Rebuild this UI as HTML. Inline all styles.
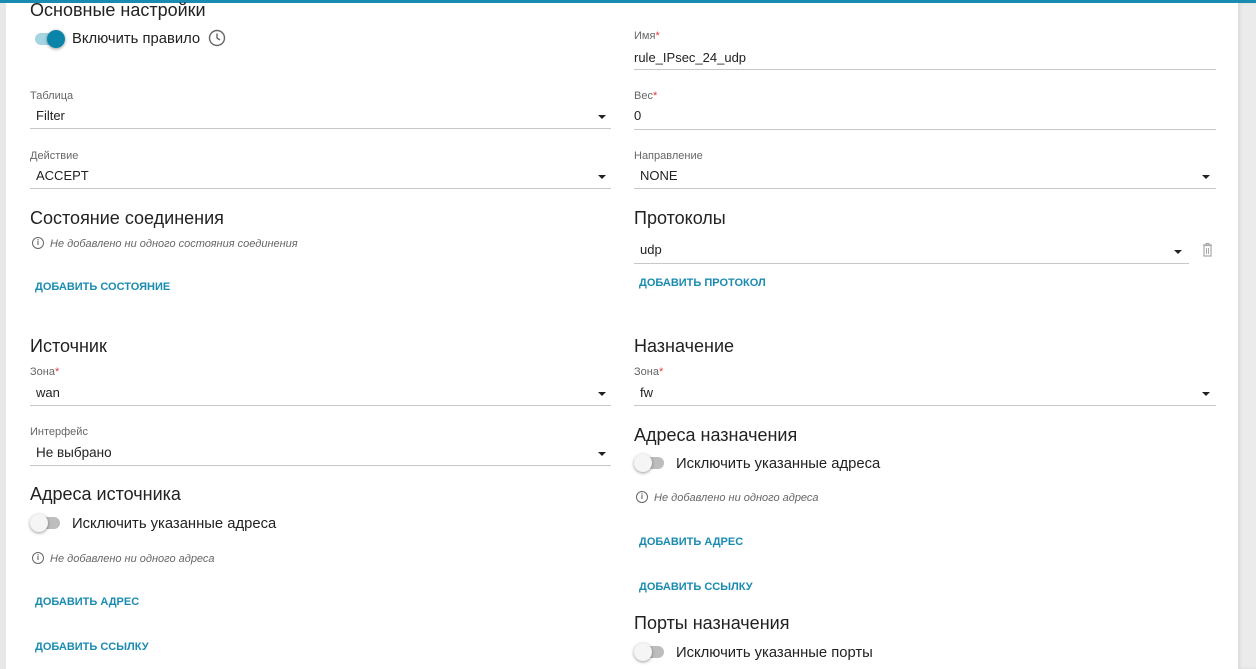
<!DOCTYPE html>
<html><head><meta charset="utf-8"><style>
*{margin:0;padding:0;box-sizing:border-box}
body{width:1256px;height:669px;overflow:hidden;background:#fff;font-family:"Liberation Sans","DejaVu Sans",sans-serif;color:#222;position:relative}
.t{position:absolute;height:20px;line-height:20px;white-space:nowrap}
.h{font-size:18px;color:#222}
.l{font-size:11px;color:#666}
.l b{color:#e53935;font-weight:normal}
.v{font-size:13px;color:#222}
.s{font-size:14.8px;color:#222}
.a{font-size:11px;font-weight:bold;color:#1a8bb0}
.i{font-size:11px;font-style:italic;color:#666}
.line{position:absolute;height:1px;background:#c8c8c8}
.arr{position:absolute;width:0;height:0;border-left:4px solid transparent;border-right:4px solid transparent;border-top:4px solid #222}
.tg{position:absolute;width:28px;height:12px;border-radius:6px;background:#bdbdbd}
.tg i{position:absolute;top:-3px;left:-2px;width:18px;height:18px;border-radius:50%;background:#f5f5f5;box-shadow:0 1px 3px rgba(0,0,0,.4)}
.tg.on{background:#a6d5e2}.tg.on i{left:12px;background:#0b84aa}
.inf{position:absolute;width:12px;height:12px;border:1.3px solid #666;border-radius:50%;font-size:8px;font-weight:bold;color:#666;text-align:center;line-height:10px;font-style:normal}
</style></head><body>
<div style="position:absolute;left:0;top:0;width:1256px;height:3px;background:#1a8bb0"></div>
<div style="position:absolute;left:0;top:3px;width:6px;height:666px;background:#e8e8e8"></div>
<div style="position:absolute;left:1238px;top:3px;width:18px;height:666px;background:#ebebeb;box-shadow:inset 2px 0 3px rgba(0,0,0,.08)"></div>

<div class="t h" style="left:30px;top:0">Основные настройки</div>
<div class="tg on" style="left:35px;top:33px"><i></i></div>
<div class="t s" style="left:72px;top:29px">Включить правило</div>
<svg style="position:absolute;left:208px;top:29px" width="18" height="18" viewBox="0 0 18 18"><circle cx="9" cy="9" r="7.5" fill="none" stroke="#666" stroke-width="1.4"/><path d="M9 4.5V9l3 2" fill="none" stroke="#666" stroke-width="1.4"/></svg>

<div class="t l" style="left:30px;top:86px">Таблица</div>
<div class="t v" style="left:36px;top:106px">Filter</div>
<div class="arr" style="left:598px;top:115px"></div>
<div class="line" style="left:30px;top:128px;width:581px"></div>

<div class="t l" style="left:30px;top:146px">Действие</div>
<div class="t v" style="left:36px;top:166px">ACCEPT</div>
<div class="arr" style="left:598px;top:175px"></div>
<div class="line" style="left:30px;top:188px;width:581px"></div>

<div class="t h" style="left:30px;top:208px">Состояние соединения</div>
<div class="inf" style="left:32px;top:237px">i</div>
<div class="t i" style="left:50px;top:234px">Не добавлено ни одного состояния соединения</div>
<div class="t a" style="left:35px;top:277px">ДОБАВИТЬ СОСТОЯНИЕ</div>

<div class="t h" style="left:30px;top:336px">Источник</div>
<div class="t l" style="left:30px;top:362px">Зона<b>*</b></div>
<div class="t v" style="left:36px;top:383px">wan</div>
<div class="arr" style="left:598px;top:392px"></div>
<div class="line" style="left:30px;top:405px;width:581px"></div>
<div class="t l" style="left:30px;top:422px">Интерфейс</div>
<div class="t s" style="left:36px;top:443px;font-size:13.5px">Не выбрано</div>
<div class="arr" style="left:598px;top:452px"></div>
<div class="line" style="left:30px;top:465px;width:581px"></div>

<div class="t h" style="left:30px;top:484px">Адреса источника</div>
<div class="tg" style="left:32px;top:517px"><i></i></div>
<div class="t s" style="left:72px;top:514px">Исключить указанные адреса</div>
<div class="inf" style="left:32px;top:552px">i</div>
<div class="t i" style="left:50px;top:549px">Не добавлено ни одного адреса</div>
<div class="t a" style="left:35px;top:592px">ДОБАВИТЬ АДРЕС</div>
<div class="t a" style="left:35px;top:637px">ДОБАВИТЬ ССЫЛКУ</div>

<div class="t l" style="left:634px;top:26px">Имя<b>*</b></div>
<div class="t v" style="left:634px;top:48px">rule_IPsec_24_udp</div>
<div class="line" style="left:634px;top:69px;width:582px"></div>
<div class="t l" style="left:634px;top:86px">Вес<b>*</b></div>
<div class="t v" style="left:634px;top:106px">0</div>
<div class="line" style="left:634px;top:129px;width:582px"></div>
<div class="t l" style="left:634px;top:146px">Направление</div>
<div class="t v" style="left:640px;top:166px">NONE</div>
<div class="arr" style="left:1202px;top:175px"></div>
<div class="line" style="left:634px;top:188px;width:582px"></div>

<div class="t h" style="left:634px;top:208px">Протоколы</div>
<div class="t v" style="left:640px;top:240px">udp</div>
<div class="arr" style="left:1174px;top:250px"></div>
<svg style="position:absolute;left:1202px;top:242px" width="11" height="15" viewBox="0 0 11 15"><path d="M1 3h9M4 3V1.5h3V3M2 3.5h7v10.5H2z" fill="none" stroke="#aaa" stroke-width="1.2"/><path d="M4.5 6v6M6.5 6v6" stroke="#aaa"/></svg>
<div class="line" style="left:634px;top:263px;width:555px"></div>
<div class="t a" style="left:639px;top:273px">ДОБАВИТЬ ПРОТОКОЛ</div>

<div class="t h" style="left:634px;top:336px">Назначение</div>
<div class="t l" style="left:634px;top:362px">Зона<b>*</b></div>
<div class="t v" style="left:640px;top:383px">fw</div>
<div class="arr" style="left:1202px;top:392px"></div>
<div class="line" style="left:634px;top:405px;width:582px"></div>
<div class="t h" style="left:634px;top:425px">Адреса назначения</div>
<div class="tg" style="left:636px;top:457px"><i></i></div>
<div class="t s" style="left:676px;top:454px">Исключить указанные адреса</div>
<div class="inf" style="left:636px;top:491px">i</div>
<div class="t i" style="left:654px;top:488px">Не добавлено ни одного адреса</div>
<div class="t a" style="left:639px;top:532px">ДОБАВИТЬ АДРЕС</div>
<div class="t a" style="left:639px;top:577px">ДОБАВИТЬ ССЫЛКУ</div>
<div class="t h" style="left:634px;top:613px">Порты назначения</div>
<div class="tg" style="left:636px;top:646px"><i></i></div>
<div class="t s" style="left:676px;top:643px">Исключить указанные порты</div>
</body></html>
